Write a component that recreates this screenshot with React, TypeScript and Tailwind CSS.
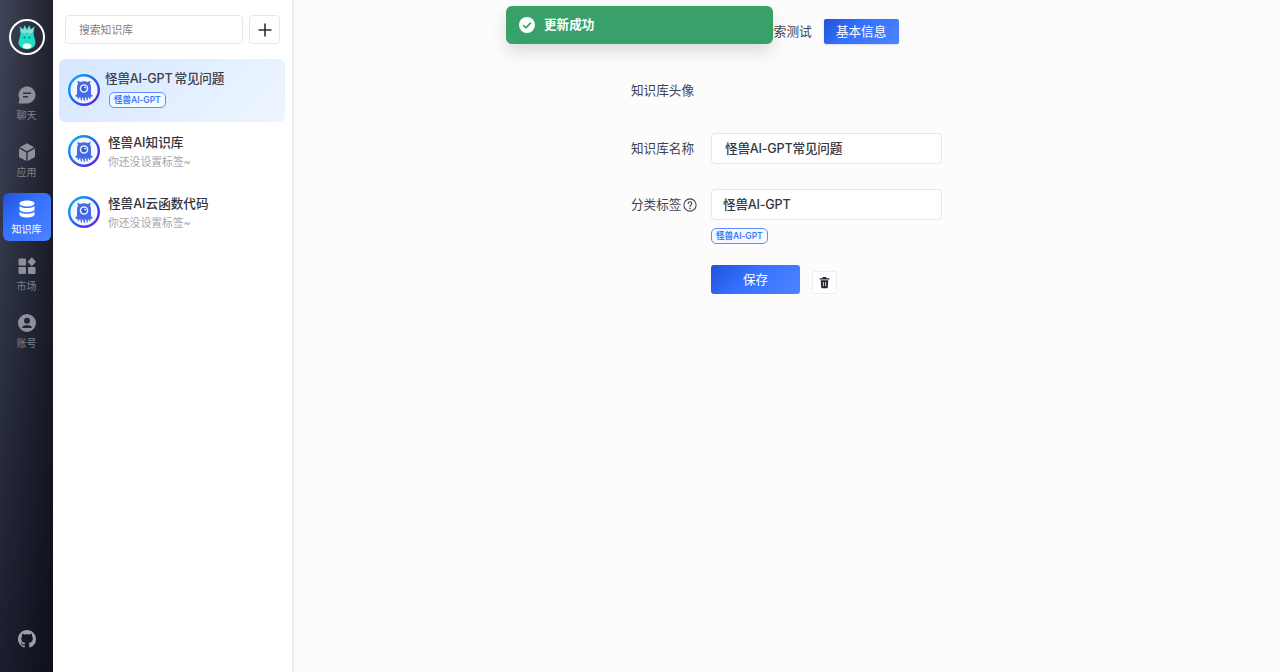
import React from "react";

const FONT = { fontFamily: '"Inter","Noto Sans CJK SC",sans-serif' };

function Monster({ id }: { id: string }) {
  return (
    <svg width="32" height="32" viewBox="0 0 32 32" className="shrink-0">
      <defs>
        <linearGradient id={id} x1="0" y1="0" x2="1" y2="1">
          <stop offset="0" stopColor="#08b4ff" />
          <stop offset="0.5" stopColor="#2563eb" />
          <stop offset="1" stopColor="#6d12e8" />
        </linearGradient>
      </defs>
      <circle cx="16" cy="16" r="14.800" fill="#f2f7ff" stroke={`url(#${id})`} strokeWidth="2.400" />
      <path d="M10 9.500 L9.300 6.800 L12.300 7.900 Q16 6.800 19.700 7.900 L22.700 6.800 L22 9.500 Q23 11.500 23 14 L23 19.500 Q23 21 24.800 21.500 Q24.500 23.200 22.300 22.800 L22.300 25 Q21 25.300 20.500 23.200 L19.800 23.200 L19.800 26.500 Q18.300 26.500 18 23.500 L17 23.500 L17 27 Q15.500 27 15.200 23.500 L14.200 23.500 L14 27 Q12.500 26.500 12.300 23.200 L11.500 23.200 Q11 25.300 9.700 25 L9.700 22.800 Q7.500 23.200 7.200 21.500 Q9 21 9 19.500 L9 14 Q9 11.500 10 9.500 Z" fill="#4769e2" />
      <circle cx="16" cy="14.500" r="4.300" fill="#e3ecff" />
      <circle cx="16" cy="14.500" r="2.700" fill="#2f56d6" />
      <circle cx="17" cy="13.600" r="0.900" fill="#fff" />
    </svg>
  );
}

function Logo() {
  return (
    <div className="w-9 h-9 rounded-full border-2 border-white flex items-center justify-center">
      <svg width="20" height="28" viewBox="0 0 20 28">
        <path d="M3.500 11 L2.500 3 L6 6.500 L7.500 2 L10 6 L12.500 2 L14 6.500 L17.500 3 L16.500 11 L18.500 19 Q19 25 10 26.500 Q1 25 1.500 19 Z" fill="#1fe0c6" />
        <path d="M4 9 L4 5 L7 7 L7.500 4 L10 8 L12.500 4 L13 7 L16 5 L16 9 L12.500 11 L10 9 L7.500 11 Z" fill="#9fd6cf" />
        <path d="M5.500 22 Q10 18.500 14.500 22 L14 25 Q10 26.500 6 25 Z" fill="#f4fffc" />
        <circle cx="7.500" cy="14.500" r="1" fill="#0f766e" />
        <circle cx="12.500" cy="14.500" r="1" fill="#0f766e" />
      </svg>
    </div>
  );
}

const ChatIcon = () => (
  <svg width="20" height="20" viewBox="0 0 20 20" fill="currentColor">
    <path fillRule="evenodd" d="M10 1.500a8.500 8.500 0 0 1 0 17H2.600a1 1 0 0 1-.9-1.300l.9-3A8.500 8.500 0 0 1 10 1.500ZM6 7.500h8v1.500H6ZM6 11h5v1.500H6Z" />
  </svg>
);
const CubeIcon = () => (
  <svg width="20" height="20" viewBox="0 0 20 20" fill="currentColor">
    <path d="M10 1.200 17.200 5.200 10 9.200 2.800 5.200Z" />
    <path d="M2 6.600 9.300 10.600V19L2.500 15.200A1 1 0 0 1 2 14.400Z" />
    <path d="M18 6.600 10.700 10.600V19L17.500 15.200A1 1 0 0 0 18 14.400Z" />
  </svg>
);
const DbIcon = () => (
  <svg width="20" height="20" viewBox="0 0 20 20" fill="currentColor">
    <path d="M10 1.500c4 0 7.500 1.200 7.500 3S14 7.500 10 7.500 2.500 6.300 2.500 4.500s3.500-3 7.500-3Z" />
    <path d="M2.500 7c1.400 1.400 4.300 2 7.500 2s6.100-.6 7.500-2v3.200c0 1.800-3.500 3-7.500 3s-7.500-1.200-7.500-3Z" />
    <path d="M2.500 12.700c1.400 1.400 4.300 2 7.500 2s6.100-.6 7.500-2v2.800c0 1.800-3.500 3-7.500 3s-7.500-1.200-7.500-3Z" />
  </svg>
);
const GridIcon = () => (
  <svg width="20" height="20" viewBox="0 0 20 20" fill="currentColor">
    <rect x="1.500" y="2.500" width="7.500" height="7" rx="1.200" />
    <rect x="1.500" y="11" width="7.500" height="7" rx="1.200" />
    <rect x="11" y="11" width="7.500" height="7" rx="1.200" />
    <path d="M14.800 1.300 19 5.800 14.800 10.300 10.600 5.800Z" />
  </svg>
);
const UserIcon = () => (
  <svg width="20" height="20" viewBox="0 0 20 20" fill="currentColor">
    <path fillRule="evenodd" d="M10 1a9 9 0 1 1 0 18 9 9 0 0 1 0-18Zm0 3.700a3 3 0 1 0 0 6 3 3 0 0 0 0-6Zm0 7.300c-2.500 0-4.700 1-4.700 2.200v.8h9.400v-.8c0-1.200-2.200-2.200-4.700-2.200Z" />
  </svg>
);
const GithubIcon = () => (
  <svg width="18" height="18" viewBox="0 0 16 16" fill="currentColor">
    <path d="M8 0C3.580 0 0 3.580 0 8c0 3.540 2.290 6.530 5.470 7.590.4.070.55-.17.55-.38 0-.19-.01-.82-.01-1.490-2.010.37-2.530-.49-2.690-.94-.09-.23-.48-.94-.82-1.130-.28-.15-.68-.52-.01-.53.630-.01 1.080.58 1.230.82.720 1.210 1.870.87 2.330.66.070-.52.280-.87.510-1.070-1.780-.2-3.640-.89-3.640-3.950 0-.87.310-1.590.820-2.150-.08-.2-.36-1.020.08-2.120 0 0 .67-.21 2.200.82.640-.18 1.320-.27 2-.27s1.360.09 2 .27c1.530-1.040 2.200-.82 2.200-.82.440 1.100.16 1.920.08 2.120.51.560.82 1.270.82 2.150 0 3.070-1.870 3.750-3.650 3.950.290.250.54.730.54 1.480 0 1.070-.01 1.930-.01 2.200 0 .21.150.46.550.38A8.010 8.010 0 0 0 16 8c0-4.420-3.580-8-8-8Z" />
  </svg>
);

function NavItem({ icon, label, active }: { icon: React.ReactNode; label: string; active?: boolean }) {
  return (
    <div
      className={
        active
          ? "w-12 h-12 rounded-md flex flex-col items-center pt-[6px] text-white bg-[linear-gradient(135deg,#2152d9_0%,#3370ff_40%,#4e83fd_100%)]"
          : "w-12 h-12 rounded-md flex flex-col items-center pt-[6px] text-[#8d919c]"
      }
    >
      {icon}
      <span className={active ? "text-[10px] leading-[14px] mt-[3px]" : "text-[10px] leading-[14px] mt-[3px] text-[#7e828d]"}>{label}</span>
    </div>
  );
}

function Tag({ children }: { children: React.ReactNode }) {
  return (
    <span className="inline-flex items-center h-4 px-1 rounded-[5px] border border-[#5d8fff] bg-[#f4f8ff] text-[#3f7bff] text-[8.600px] font-semibold leading-none tracking-[-0.1px]">
      {children}
    </span>
  );
}

function KbRow({ id, name, sub }: { id: string; name: string; sub: string }) {
  return (
    <div className="h-[61px] flex items-center pl-[9px] pr-2 gap-2">
      <Monster id={id} />
      <div className="flex flex-col pt-[2px]">
        <span className="text-[12.600px] leading-[20px] font-medium text-[#2f3340]">{name}</span>
        <span className="text-[10.800px] leading-[17px] mt-[1px] text-[#a3a6ad]">{sub}</span>
      </div>
    </div>
  );
}

export default function App() {
  return (
    <div style={FONT} className="relative flex w-[1280px] h-[672px] overflow-hidden bg-[#fcfcfd]">
      {/* Sidebar */}
      <aside className="w-[53px] shrink-0 flex flex-col items-center pt-[19px] pb-[24px] bg-[linear-gradient(to_right,transparent,rgba(0,0,0,0.5)),linear-gradient(to_bottom,#40455a,#1a1e30)]">
        <Logo />
        <nav className="flex flex-col gap-[9px] mt-[24px]">
          <NavItem icon={<ChatIcon />} label="聊天" />
          <NavItem icon={<CubeIcon />} label="应用" />
          <NavItem icon={<DbIcon />} label="知识库" active />
          <NavItem icon={<GridIcon />} label="市场" />
          <NavItem icon={<UserIcon />} label="账号" />
        </nav>
        <div className="mt-auto text-[#9a9ea8]">
          <GithubIcon />
        </div>
      </aside>

      {/* List */}
      <section className="w-[241px] shrink-0 bg-white border-r-2 border-[#ececee] pl-[6px] pr-[7px] pt-[15px]">
        <div className="flex gap-[6px] pl-[6px] pr-[5px]">
          <div className="w-[178px] h-[29px] rounded-[4px] border border-[#e5e7eb] bg-white flex items-center pl-[13px] pt-[3px] text-[10.800px] text-[#7d818b]">
            搜索知识库
          </div>
          <div className="w-[31px] h-[29px] rounded-[4px] border border-[#e5e7eb] bg-white flex items-center justify-center">
            <svg width="14" height="14" viewBox="0 0 14 14" stroke="#2b2f3a" strokeWidth="1.600">
              <path d="M7 0.500v13M0.500 7h13" />
            </svg>
          </div>
        </div>
        <div className="mt-[15px] h-[63px] w-[226px] rounded-md flex items-center pl-[9px] gap-[5px] bg-[linear-gradient(135deg,#d6e7ff_0%,#eef5ff_100%)]">
          <span className="-mt-[1px] flex shrink-0"><Monster id="m1" /></span>
          <div className="flex flex-col -mt-[4px]">
            <span className="text-[12.600px] leading-[20px] font-medium text-[#3a3e4b] tracking-[-0.2px]">怪兽AI-GPT<span className="ml-[2px]">常见问题</span></span>
            <span className="ml-[4px] mt-[3px] flex"><Tag>怪兽AI-GPT</Tag></span>
          </div>
        </div>
        <div className="-mt-[2px]">
          <KbRow id="m2" name="怪兽AI知识库" sub="你还没设置标签~" />
          <KbRow id="m3" name="怪兽AI云函数代码" sub="你还没设置标签~" />
        </div>
      </section>

      {/* Main */}
      <main className="flex-1 flex flex-col pt-[19px]">
        <div className="flex justify-center items-center pl-[12px] text-[12.600px] text-[#3f434f]">
          <div className="h-[25px] flex items-center px-3 pt-[2px]">数据集</div>
          <div className="h-[25px] flex items-center px-3 pt-[2px]">检索测试</div>
          <div className="h-[25px] w-[75px] rounded-[2px] flex items-center justify-center pt-[2px] text-white shadow-sm bg-[linear-gradient(135deg,#2152d9_0%,#3370ff_40%,#4e83fd_100%)]">
            基本信息
          </div>
        </div>

        <div className="flex flex-col pl-[337px] text-[12.600px] text-[#3f434f]">
          <div className="mt-[38px] h-[18px] flex items-center">知识库头像</div>

          <div className="mt-[33px] flex items-center">
            <div className="w-[80px] pt-[1px]">知识库名称</div>
            <div className="w-[231px] h-[31px] rounded-[4px] border border-[#e5e7eb] bg-white flex items-center pl-[13px] pt-[1px] font-medium text-[#33363f] tracking-[-0.2px]">
              怪兽AI-GPT常见问题
            </div>
          </div>

          <div className="mt-[25px] flex items-center">
            <div className="w-[80px] flex items-center gap-[2px] pt-[1px]">
              分类标签
              <svg width="14" height="14" viewBox="0 0 24 24" fill="none" stroke="#3f434f" strokeWidth="1.800" strokeLinecap="round">
                <circle cx="12" cy="12" r="10.500" />
                <path d="M9 9.500a3 3 0 1 1 4.600 2.500c-1 .6-1.600 1.200-1.600 2.500" />
                <circle cx="12" cy="17.800" r="0.500" />
              </svg>
            </div>
            <div className="w-[231px] h-[31px] rounded-[4px] border border-[#e5e7eb] bg-white flex items-center pl-[11px] pt-[1px] font-medium text-[#33363f] tracking-[-0.2px]">
              怪兽AI-GPT
            </div>
          </div>

          <div className="ml-[80px] mt-[8px] h-4 flex">
            <Tag>怪兽AI-GPT</Tag>
          </div>

          <div className="ml-[80px] mt-[21px] flex items-end gap-3">
            <div className="w-[89px] h-[29px] rounded-[3px] flex items-center justify-center pt-[1px] text-white text-[12.600px] bg-[linear-gradient(135deg,#2152d9_0%,#3370ff_40%,#4e83fd_100%)]">
              保存
            </div>
            <div className="w-[25px] h-[23px] rounded-[2px] border border-[#eceef0] bg-white flex items-center justify-center">
              <svg width="13" height="13" viewBox="0 0 24 24" fill="#23262f">
                <path d="M9 2h6l1 2h5v2.500H3V4h5ZM5 8h14l-1 13a1.500 1.500 0 0 1-1.500 1.500h-9A1.500 1.500 0 0 1 6 21Zm4 3v8h1.500v-8Zm4.500 0v8H15v-8Z" />
              </svg>
            </div>
          </div>
        </div>
      </main>

      {/* Toast */}
      <div className="absolute left-[506px] top-[6px] w-[267px] h-[38px] rounded-md bg-[#38a169] flex items-center pl-[13px] gap-[9px] shadow-[0_8px_16px_rgba(0,0,0,0.13)]">
        <svg width="16" height="16" viewBox="0 0 16 16">
          <circle cx="8" cy="8" r="8" fill="#fff" />
          <path d="M4.300 8.200 7 10.800 11.800 5.600" fill="none" stroke="#38a169" strokeWidth="1.700" />
        </svg>
        <span className="text-white text-[12.600px] font-semibold pt-[1px]">更新成功</span>
      </div>
    </div>
  );
}
